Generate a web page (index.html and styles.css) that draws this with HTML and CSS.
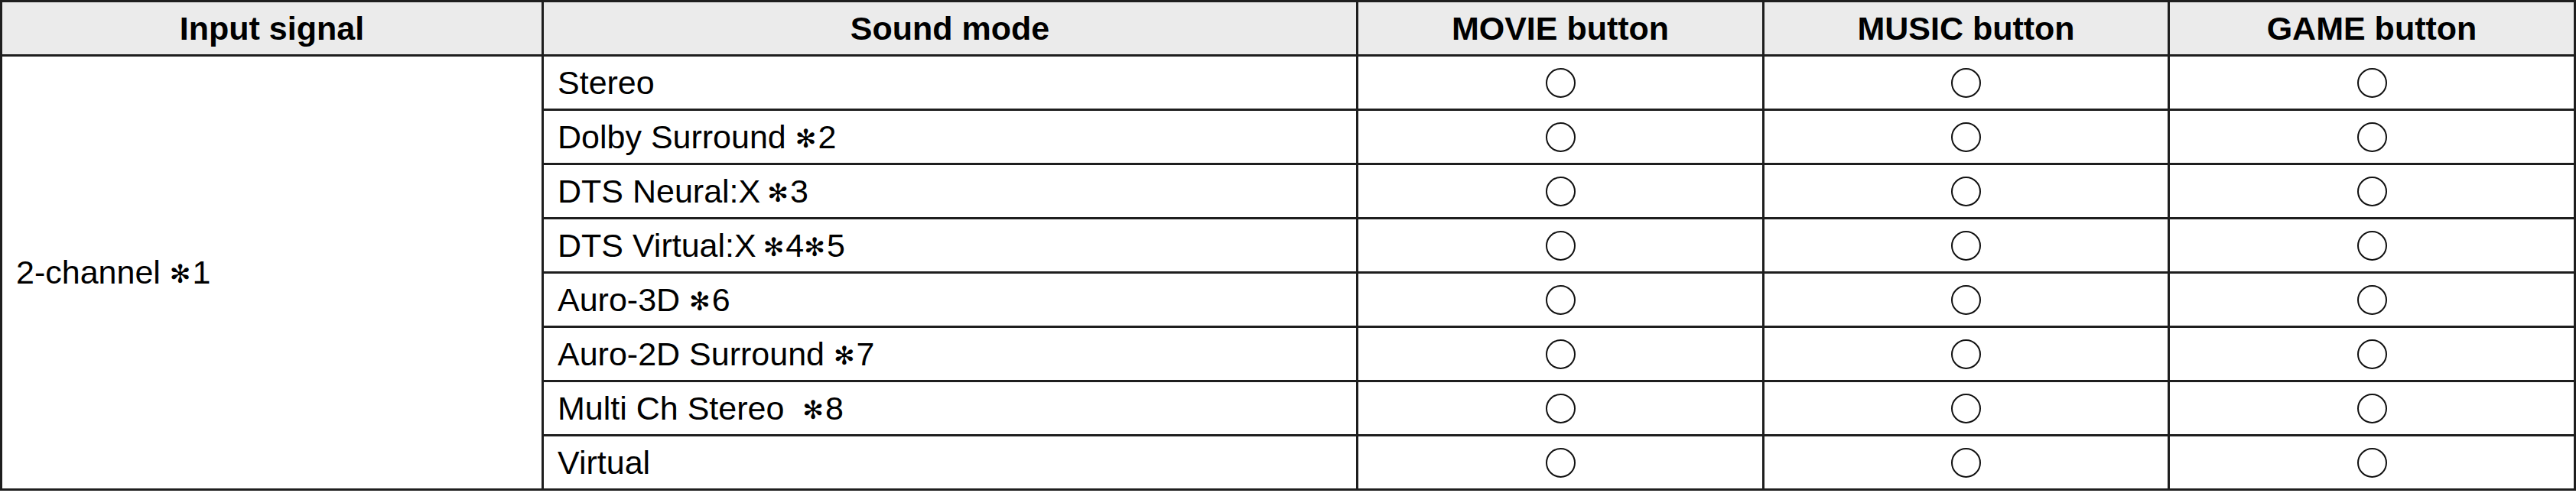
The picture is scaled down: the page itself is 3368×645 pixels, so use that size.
FILE: index.html
```html
<!DOCTYPE html>
<html lang="en">
<head>
<meta charset="utf-8">
<title>Sound mode table</title>
<link rel="stylesheet" href="styles.css">
</head>
<body>
<div class="table">
  <div class="cell head"><span>Input signal</span></div>
  <div class="cell head"><span>Sound mode</span></div>
  <div class="cell head"><span>MOVIE button</span></div>
  <div class="cell head"><span>MUSIC button</span></div>
  <div class="cell head"><span>GAME button</span></div>

  <div class="cell input"><span class="label">2-channel <span class="note">✻</span>1</span></div>

  <div class="cell mode"><span class="label">Stereo</span></div>
  <div class="cell mark"><span class="circle"></span></div>
  <div class="cell mark"><span class="circle"></span></div>
  <div class="cell mark"><span class="circle"></span></div>

  <div class="cell mode"><span class="label">Dolby Surround <span class="note">✻</span>2</span></div>
  <div class="cell mark"><span class="circle"></span></div>
  <div class="cell mark"><span class="circle"></span></div>
  <div class="cell mark"><span class="circle"></span></div>

  <div class="cell mode"><span class="label">DTS Neural:X<span class="note tight">✻</span>3</span></div>
  <div class="cell mark"><span class="circle"></span></div>
  <div class="cell mark"><span class="circle"></span></div>
  <div class="cell mark"><span class="circle"></span></div>

  <div class="cell mode"><span class="label">DTS Virtual:X<span class="note tight">✻</span>4<span class="note">✻</span>5</span></div>
  <div class="cell mark"><span class="circle"></span></div>
  <div class="cell mark"><span class="circle"></span></div>
  <div class="cell mark"><span class="circle"></span></div>

  <div class="cell mode"><span class="label">Auro-3D <span class="note">✻</span>6</span></div>
  <div class="cell mark"><span class="circle"></span></div>
  <div class="cell mark"><span class="circle"></span></div>
  <div class="cell mark"><span class="circle"></span></div>

  <div class="cell mode"><span class="label">Auro-2D Surround <span class="note">✻</span>7</span></div>
  <div class="cell mark"><span class="circle"></span></div>
  <div class="cell mark"><span class="circle"></span></div>
  <div class="cell mark"><span class="circle"></span></div>

  <div class="cell mode"><span class="label">Multi Ch Stereo &nbsp;<span class="note">✻</span>8</span></div>
  <div class="cell mark"><span class="circle"></span></div>
  <div class="cell mark"><span class="circle"></span></div>
  <div class="cell mark"><span class="circle"></span></div>

  <div class="cell mode"><span class="label">Virtual</span></div>
  <div class="cell mark"><span class="circle"></span></div>
  <div class="cell mark"><span class="circle"></span></div>
  <div class="cell mark"><span class="circle"></span></div>
</div>
</body>
</html>
```
FILE: styles.css
```css
html, body {
  margin: 0;
  padding: 0;
  background: #ffffff;
}

body {
  font-family: "Liberation Sans", Arial, sans-serif;
  font-size: 43px;
  color: #000000;
}

.table {
  display: grid;
  grid-template-columns: 705px 1062px 528px 527px 528px;
  grid-auto-rows: 68px;
  gap: 3px;
  padding: 3px;
  width: 3368px;
  box-sizing: border-box;
  background: #1e1e1e;
}

.cell {
  background: #ffffff;
  display: flex;
  align-items: center;
  white-space: nowrap;
}

.head {
  background: #ebebeb;
  font-weight: bold;
  justify-content: center;
}

.input {
  grid-row: 2 / span 8;
  grid-column: 1;
  padding-left: 18px;
}

.mode {
  grid-column: 2;
  padding-left: 18px;
}

.label {
  white-space: pre;
}

.mark {
  justify-content: center;
}

.circle {
  display: block;
  width: 39px;
  height: 39px;
  box-sizing: border-box;
  border: 2px solid #111111;
  border-radius: 50%;
}

.note {
  font-family: "DejaVu Sans", sans-serif;
  font-size: 33px;
  font-weight: bold;
  margin-right: 2px;
  position: relative;
  top: -1px;
}

.note.tight {
  margin-left: 9px;
}
```
